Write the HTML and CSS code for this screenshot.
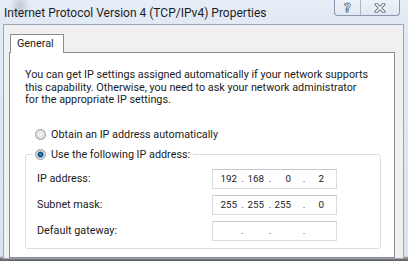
FILE: index.html
```html
<!DOCTYPE html>
<html lang="en">
<head>
<meta charset="utf-8">
<title>Internet Protocol Version 4 (TCP/IPv4) Properties</title>
<link rel="stylesheet" href="styles.css">
</head>
<body>
<div class="window">
  <div class="titlebar">
    <span class="title">Internet Protocol Version 4 (TCP/IPv4) Properties</span>
    <div class="caption">
      <div class="cbtn help"><span class="qmark">?</span></div>
      <div class="cbtn close">
        <svg width="12" height="10" viewBox="0 0 12 10">
          <path d="M2.5 1.5 L9.5 8.5 M9.5 1.5 L2.5 8.5" stroke="#6c7b90" stroke-width="3.4" stroke-linecap="square" fill="none"/>
          <path d="M2.5 1.5 L9.5 8.5 M9.5 1.5 L2.5 8.5" stroke="#ffffff" stroke-width="1.4" stroke-linecap="square" fill="none"/>
        </svg>
      </div>
    </div>
  </div>
  <div class="dialog">
    <div class="tabs"><div class="tab">General</div></div>
    <div class="panel">
      <p class="intro">You can get IP settings assigned automatically if your network supports<br>this capability. Otherwise, you need to ask your network administrator<br>for the appropriate IP settings.</p>
      <div class="radio-row"><span class="radio"></span><span>Obtain an IP address automatically</span></div>
      <fieldset class="group">
        <legend class="legend"><span class="radio checked"></span><span>Use the following IP address:</span></legend>
        <div class="rows">
          <span class="label">IP address:</span>
          <div class="ipbox">
            <span class="f f1">192</span><span class="d d1">.</span><span class="f f2">168</span><span class="d d2">.</span><span class="f f3">0</span><span class="d d3">.</span><span class="f f4">2</span>
          </div>
          <span class="label">Subnet mask:</span>
          <div class="ipbox">
            <span class="f f1">255</span><span class="d d1">.</span><span class="f f2">255</span><span class="d d2">.</span><span class="f f3">255</span><span class="d d3">.</span><span class="f f4">0</span>
          </div>
          <span class="label">Default gateway:</span>
          <div class="ipbox">
            <span class="f f1"></span><span class="d d1">.</span><span class="f f2"></span><span class="d d2">.</span><span class="f f3"></span><span class="d d3">.</span><span class="f f4"></span>
          </div>
        </div>
      </fieldset>
    </div>
  </div>
</div>
</body>
</html>
```
FILE: styles.css
```css
* { box-sizing: border-box; }
html, body { margin: 0; padding: 0; }
body {
  width: 408px;
  height: 261px;
  overflow: hidden;
  font-family: Roboto, "Noto Sans", sans-serif;
  font-size: 10.8px;
  color: #1b1b1b;
}
.window {
  width: 408px;
  height: 261px;
  display: flex;
  flex-direction: column;
  background:
    radial-gradient(ellipse 10px 14px at 20px 6px, rgba(150,155,165,0.45), rgba(150,155,165,0) 100%),
    linear-gradient(to bottom, #e6eef7 0, #e0e9f4 24px, #dae4f0 256px, #8a8a8a 258px, #5a5a5a 261px);
}
.titlebar {
  height: 24px;
  flex: none;
  display: flex;
  align-items: flex-start;
  padding: 0 8px 0 4px;
}
.title {
  font-size: 12px;
  line-height: 26px;
  color: #1e1e1e;
  white-space: nowrap;
}
.caption {
  margin-left: auto;
  display: flex;
  height: 16px;
  border: 1px solid #8a98ad;
  border-top: none;
  border-radius: 0 0 4px 4px;
  background: linear-gradient(to bottom, #eef3f9, #e1e8f1);
}
.cbtn {
  display: flex;
  align-items: center;
  justify-content: center;
}
.help {
  width: 26px;
  border-right: 1px solid #aab6c6;
}
.close { width: 38px; }
.qmark {
  font-family: "DejaVu Sans", sans-serif;
  font-weight: bold;
  font-size: 12px;
  line-height: 14px;
  color: #ffffff;
  -webkit-text-stroke: 0.9px #6c7b90;
}
.dialog {
  flex: none;
  height: 235px;
  margin: 0 4px 0 3px;
  border: 1px solid #9ba6b4;
  background: #f0f0f0;
  padding: 9px 8px 0 5px;
  display: flex;
  flex-direction: column;
}
.tabs {
  display: flex;
  padding-left: 1px;
  height: 19px;
  margin-bottom: -1px;
  flex: none;
}
.tab {
  position: relative;
  z-index: 1;
  height: 19px;
  width: 54px;
  border: 1px solid #898c95;
  border-bottom: none;
  background: #ffffff;
  padding-left: 6px;
  line-height: 17px;
  white-space: nowrap;
}
.panel {
  flex: 1;
  background: #ffffff;
  border: 1px solid #898c95;
  padding: 16px 13px 0 15px;
}
.intro {
  margin: 0;
  line-height: 12.6px;
  white-space: nowrap;
}
.radio-row {
  margin-top: 21px;
  height: 14px;
  display: flex;
  align-items: center;
  gap: 5px;
  padding-left: 10px;
}
.radio {
  flex: none;
  width: 11px;
  height: 11px;
  border-radius: 50%;
  border: 1px solid #959a9f;
  background: radial-gradient(circle at 50% 45%, #f6f6f6 0, #e2e2e2 60%, #cfcfcf 100%);
}
.radio.checked {
  background: radial-gradient(circle at 50% 50%, #3f8cc0 0, #0c4f7d 2.4px, #9bbfd8 3.2px, #e6e6e6 3.8px, #d0d0d0 100%);
}
.group {
  margin: 6px 0 0 0;
  padding: 0;
  border: 1px solid #d5dfe5;
  border-radius: 3px;
  min-width: 0;
}
.legend {
  margin-left: 7px;
  padding: 0 3px 0 2px;
  height: 14px;
  display: flex;
  align-items: center;
  gap: 5px;
}
.rows {
  display: grid;
  grid-template-columns: 175px 125px;
  grid-auto-rows: 20px;
  row-gap: 6px;
  align-items: center;
  padding: 7px 0 7px 11px;
}
.label { white-space: nowrap; }
.ipbox {
  height: 20px;
  border: 1px solid #d9dde2;
  border-top-color: #c4c8ce;
  background: #ffffff;
  display: grid;
  grid-template-columns: 24px 11px 16px 12px 15px 26px 7px;
  align-items: center;
  font-size: 9.8px;
  line-height: 18px;
}
.f {
  display: flex;
  justify-content: flex-end;
  white-space: nowrap;
}
.d {
  display: flex;
  justify-content: center;
}
```
